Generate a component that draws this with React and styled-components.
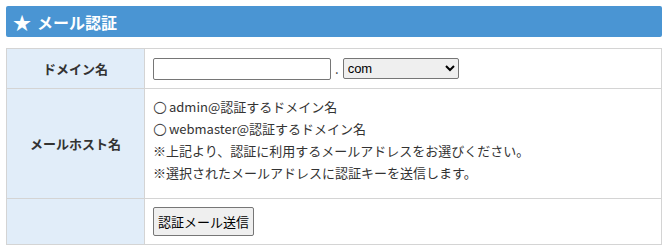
import styled, { createGlobalStyle } from "styled-components";

const GlobalStyle = createGlobalStyle`
  body {
    margin: 0;
    padding: 6px;
    background: #fff;
    font-family: "Noto Sans CJK JP", "Noto Sans", sans-serif;
    font-size: 13px;
    color: #333;
  }
`;

const Header = styled.h2`
  margin: 0;
  height: 31px;
  display: flex;
  align-items: center;
  gap: 6px;
  padding: 0 7px;
  background: #4a95d3;
  color: #fff;
  font-size: 16px;
  font-weight: bold;
  border-radius: 2px;
`;

const Star = styled.span`
  font-size: 18px;
`;

const Table = styled.table`
  margin-top: 11px;
  width: 100%;
  border-collapse: collapse;
`;

const Th = styled.th`
  width: 137px;
  padding: 0;
  background: #e1edf9;
  border: 1px solid #d4d4d4;
  font-weight: bold;
  text-align: center;
  vertical-align: middle;
`;

const Td = styled.td`
  border: 1px solid #d4d4d4;
  padding: ${(p) => p.$pad || "8px"};
  height: ${(p) => p.$h};
  box-sizing: border-box;
`;

const TextInput = styled.input`
  width: 178px;
  height: 22px;
  box-sizing: border-box;
  border: 1px solid #767676;
  border-radius: 2px;
  margin: 0;
  vertical-align: middle;
`;

const Dot = styled.span`
  margin: 0 4px;
  vertical-align: middle;
`;

const Select = styled.select`
  width: 116px;
  height: 21px;
  box-sizing: border-box;
  border: 1px solid #767676;
  border-radius: 2px;
  font-family: "Liberation Sans", sans-serif;
  font-size: 13px;
  vertical-align: middle;
`;

const Line = styled.div`
  height: 22px;
  line-height: 22px;
`;

const Circle = styled.span`
  font-family: "DejaVu Sans", sans-serif;
  font-size: 16px;
  line-height: 1;
  margin-right: 2px;
  color: #444;
`;

const Button = styled.button`
  width: 101px;
  height: 29px;
  padding: 0;
  white-space: nowrap;
  font-family: "Noto Sans CJK JP", sans-serif;
  font-size: 13px;
  color: #000;
  background: #efefef;
  border: 1px solid #767676;
  border-radius: 2px;
`;

export default function App() {
  return (
    <>
      <GlobalStyle />
      <Header>
        <Star>★</Star>
        <span>メール認証</span>
      </Header>
      <Table>
        <tbody>
          <tr>
            <Th>ドメイン名</Th>
            <Td $h="40px">
              <TextInput type="text" />
              <Dot>.</Dot>
              <Select defaultValue="com">
                <option value="com">com</option>
                <option value="net">net</option>
                <option value="jp">jp</option>
              </Select>
            </Td>
          </tr>
          <tr>
            <Th>メールホスト名</Th>
            <Td $h="110px" $pad="5px 8px 12px">
              <Line><Circle>○</Circle>admin@認証するドメイン名</Line>
              <Line><Circle>○</Circle>webmaster@認証するドメイン名</Line>
              <Line>※上記より、認証に利用するメールアドレスをお選びください。</Line>
              <Line>※選択されたメールアドレスに認証キーを送信します。</Line>
            </Td>
          </tr>
          <tr>
            <Th></Th>
            <Td $h="45px">
              <Button>認証メール送信</Button>
            </Td>
          </tr>
        </tbody>
      </Table>
    </>
  );
}
